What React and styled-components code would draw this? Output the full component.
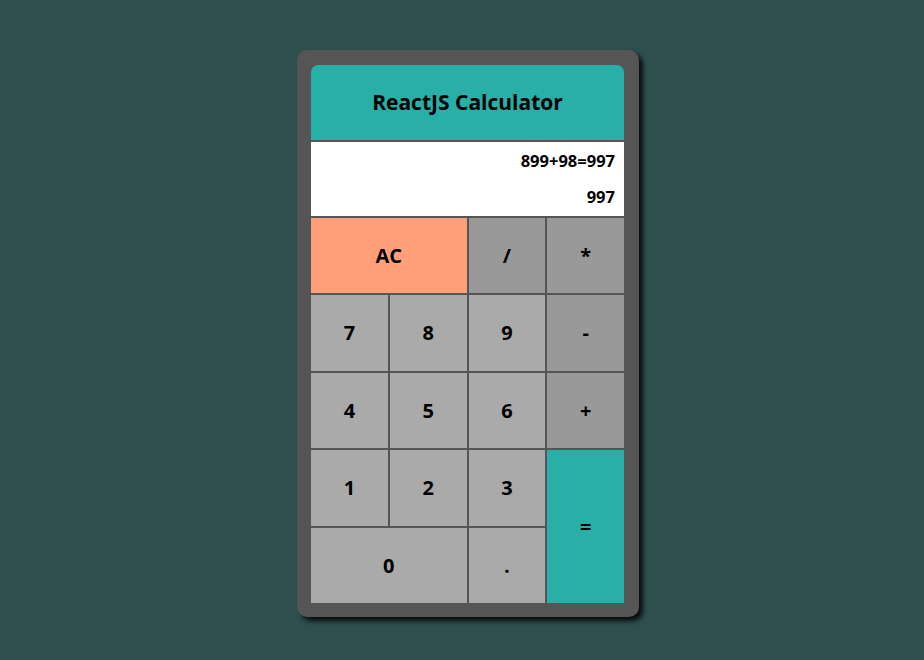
import React, { useState } from 'react';
import styled, { createGlobalStyle } from 'styled-components';

const GlobalStyle = createGlobalStyle`
  html, body {
    margin: 0;
    padding: 0;
    background-color: #2f4f4f;
    font-family: "Open Sans", "DejaVu Sans", sans-serif;
  }
`;

const Page = styled.div`
  width: 924px;
  height: 660px;
  display: flex;
  justify-content: center;
  padding: 50px 0 0 12px;
  box-sizing: border-box;
`;

const Wrapper = styled.div`
  width: 342px;
  height: 567px;
  box-sizing: border-box;
  padding: 15px 15px 14px 14px;
  background-color: #555555;
  border-radius: 10px;
  box-shadow: 4px 4px 5px rgba(0, 0, 0, 0.85);
  display: flex;
  flex-direction: column;
  gap: 2px;
`;

const Header = styled.div`
  height: 75px;
  background-color: #28afa8;
  border-radius: 7px 7px 0 0;
  display: flex;
  align-items: center;
  justify-content: center;
  font-size: 21px;
  font-weight: 700;
  color: #000;
`;

const Display = styled.div`
  height: 74px;
  background-color: #fff;
  display: flex;
  flex-direction: column;
  align-items: flex-end;
  justify-content: space-between;
  padding: 7px 9px 8px;
  box-sizing: border-box;
  font-size: 16.5px;
  font-weight: 700;
  color: #000;
`;

const Keypad = styled.div`
  display: grid;
  grid-template-columns: repeat(4, 1fr);
  grid-auto-rows: 75.5px;
  gap: 2px;
`;

const colors = {
  num: '#aaaaaa',
  op: '#999999',
  clear: '#ffa07a',
  equals: '#28afa8',
};

const Key = styled.button`
  border: none;
  margin: 0;
  padding: 0;
  font-family: inherit;
  font-size: 20px;
  font-weight: 700;
  color: #000;
  cursor: pointer;
  background-color: ${p => colors[p.$kind || 'num']};
  grid-column: span ${p => p.$wide ? 2 : 1};
  grid-row: span ${p => p.$tall ? 2 : 1};
`;

const App = () => {
  const [expr] = useState('899+98=997');
  const [result] = useState('997');

  return (
    <Page>
      <GlobalStyle />
      <Wrapper>
        <Header>ReactJS Calculator</Header>
        <Display>
          <span>{expr}</span>
          <span>{result}</span>
        </Display>
        <Keypad>
          <Key $kind="clear" $wide>AC</Key>
          <Key $kind="op">/</Key>
          <Key $kind="op">*</Key>
          <Key>7</Key>
          <Key>8</Key>
          <Key>9</Key>
          <Key $kind="op">-</Key>
          <Key>4</Key>
          <Key>5</Key>
          <Key>6</Key>
          <Key $kind="op">+</Key>
          <Key>1</Key>
          <Key>2</Key>
          <Key>3</Key>
          <Key $kind="equals" $tall>=</Key>
          <Key $wide>0</Key>
          <Key>.</Key>
        </Keypad>
      </Wrapper>
    </Page>
  );
};

export default App;
